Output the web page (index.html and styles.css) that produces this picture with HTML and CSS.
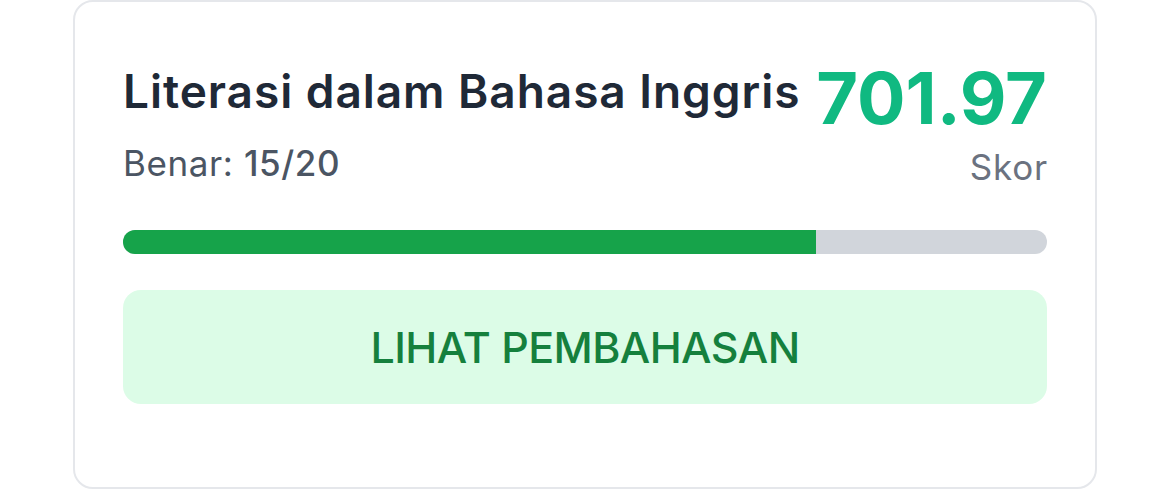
FILE: index.html
```html
<!DOCTYPE html>
<html lang="id">
<head>
<meta charset="utf-8">
<title>Hasil</title>
<link rel="stylesheet" href="styles.css">
</head>
<body>
<div class="card">
  <div class="head">
    <div class="info">
      <div class="title">Literasi dalam Bahasa Inggris</div>
      <div class="correct">Benar: <span class="num">15/20</span></div>
    </div>
    <div class="score">
      <div class="value">701.97</div>
      <div class="label">Skor</div>
    </div>
  </div>
  <div class="track"><div class="fill" style="width:75%"></div></div>
  <button class="btn">LIHAT PEMBAHASAN</button>
</div>
</body>
</html>
```

FILE: styles.css
```css
* { box-sizing: border-box; }
html, body { margin: 0; padding: 0; background: #fff; }
body {
  font-family: Inter, "Noto Sans", sans-serif;
  width: 1170px;
  height: 489px;
  overflow: hidden;
}
.card {
  margin-left: 73px;
  width: 1024px;
  height: 489px;
  border: 2px solid #e5e7eb;
  border-radius: 20px;
  padding: 60px 48px 0 48px;
  display: flex;
  flex-direction: column;
}
.head {
  display: flex;
  justify-content: space-between;
  align-items: flex-start;
}
.info { display: flex; flex-direction: column; padding-top: 1px; }
.title {
  font-size: 46px;
  line-height: 56px;
  font-weight: 600;
  letter-spacing: 0.95px;
  color: #1f2937;
}
.correct {
  margin-top: 20px;
  font-size: 35px;
  line-height: 48px;
  letter-spacing: 0.6px;
  color: #4b5563;
}
.correct .num { font-weight: 500; }
.score { display: flex; flex-direction: column; align-items: flex-end; }
.value {
  font-size: 72px;
  line-height: 72px;
  font-weight: 700;
  color: #10b981;
}
.label {
  margin-top: 8px;
  font-size: 35px;
  line-height: 51px;
  letter-spacing: 0.8px;
  margin-right: -1px;
  color: #6b7280;
}
.track {
  margin-top: 37px;
  height: 24px;
  border-radius: 12px;
  background: #d1d5db;
  overflow: hidden;
}
.fill { height: 100%; background: #16a34a; }
.btn {
  margin-top: 36px;
  height: 114px;
  border: none;
  border-radius: 18px;
  background: #dcfce7;
  color: #15803d;
  font-family: Inter, "Noto Sans", sans-serif;
  font-size: 43px;
  font-weight: 500;
  letter-spacing: -0.6px;
  padding: 0;
}
```
